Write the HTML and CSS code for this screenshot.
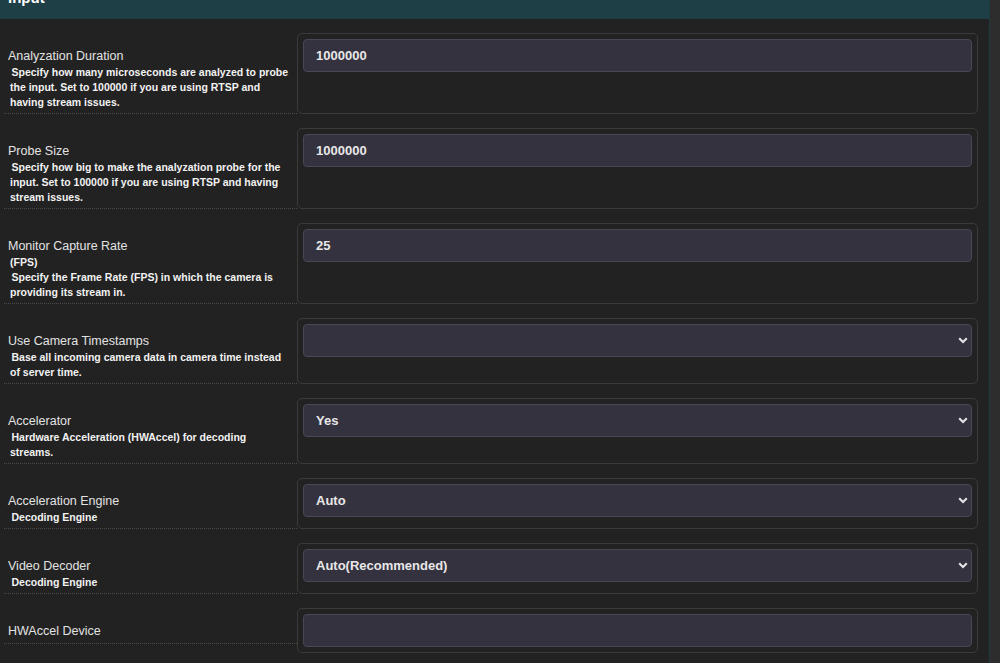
FILE: index.html
```html
<!DOCTYPE html>
<html>
<head>
<meta charset="utf-8">
<title>Input</title>
<link rel="stylesheet" href="styles.css">
</head>
<body>
<div class="page">
  <main class="panel">
    <div class="panel-head"><h3 class="panel-title">Input</h3></div>
    <div class="panel-body">

      <div class="row">
        <div class="lbl">
          <span class="lbl-title">Analyzation Duration</span>
          <span class="lbl-desc">Specify how many microseconds are analyzed to probe the input. Set to 100000 if you are using RTSP and having stream issues.</span>
        </div>
        <div class="field"><div class="input">1000000</div></div>
      </div>

      <div class="row">
        <div class="lbl">
          <span class="lbl-title">Probe Size</span>
          <span class="lbl-desc">Specify how big to make the analyzation probe for the input. Set to 100000 if you are using RTSP and having stream issues.</span>
        </div>
        <div class="field"><div class="input">1000000</div></div>
      </div>

      <div class="row">
        <div class="lbl">
          <span class="lbl-title">Monitor Capture Rate</span>
          <span class="lbl-sub">(FPS)</span>
          <span class="lbl-desc">Specify the Frame Rate (FPS) in which the camera is providing its stream in.</span>
        </div>
        <div class="field"><div class="input">25</div></div>
      </div>

      <div class="row">
        <div class="lbl">
          <span class="lbl-title">Use Camera Timestamps</span>
          <span class="lbl-desc">Base all incoming camera data in camera time instead of server time.</span>
        </div>
        <div class="field"><div class="input select"><span class="val"></span><svg class="chev" width="10" height="7" viewBox="0 0 10 7"><polyline points="1.2,1.2 5,5 8.8,1.2" fill="none" stroke="#e6e6e6" stroke-width="2"/></svg></div></div>
      </div>

      <div class="row">
        <div class="lbl">
          <span class="lbl-title">Accelerator</span>
          <span class="lbl-desc">Hardware Acceleration (HWAccel) for decoding streams.</span>
        </div>
        <div class="field"><div class="input select"><span class="val">Yes</span><svg class="chev" width="10" height="7" viewBox="0 0 10 7"><polyline points="1.2,1.2 5,5 8.8,1.2" fill="none" stroke="#e6e6e6" stroke-width="2"/></svg></div></div>
      </div>

      <div class="row">
        <div class="lbl">
          <span class="lbl-title">Acceleration Engine</span>
          <span class="lbl-desc">Decoding Engine</span>
        </div>
        <div class="field"><div class="input select"><span class="val">Auto</span><svg class="chev" width="10" height="7" viewBox="0 0 10 7"><polyline points="1.2,1.2 5,5 8.8,1.2" fill="none" stroke="#e6e6e6" stroke-width="2"/></svg></div></div>
      </div>

      <div class="row">
        <div class="lbl">
          <span class="lbl-title">Video Decoder</span>
          <span class="lbl-desc">Decoding Engine</span>
        </div>
        <div class="field"><div class="input select"><span class="val">Auto(Recommended)</span><svg class="chev" width="10" height="7" viewBox="0 0 10 7"><polyline points="1.2,1.2 5,5 8.8,1.2" fill="none" stroke="#e6e6e6" stroke-width="2"/></svg></div></div>
      </div>

      <div class="row">
        <div class="lbl">
          <span class="lbl-title">HWAccel Device</span>
        </div>
        <div class="field"><div class="input"></div></div>
      </div>

    </div>
  </main>
  <div class="scroll-track"></div>
</div>
</body>
</html>
```

FILE: styles.css
```css
html, body {
  margin: 0;
  padding: 0;
  background: #222222;
}

body {
  font-family: "Liberation Sans", Arial, sans-serif;
  color: #e4e4e4;
}

.page {
  display: flex;
  height: 663px;
  overflow: hidden;
}

.panel {
  flex: 1;
  min-width: 0;
  background: #222222;
  border-right: 1px solid #1d3a3f;
}

.panel-head {
  height: 19px;
  overflow: hidden;
  background: #1f3f46;
  padding-left: 8px;
}

.panel-title {
  margin: -11px 0 0 0;
  font-size: 15px;
  line-height: 18px;
  font-weight: bold;
  color: #ffffff;
}

.panel-body {
  padding: 14px 11px 0 4px;
}

.row {
  display: flex;
  margin-bottom: 14px;
}

.lbl {
  width: 293px;
  flex: none;
  box-sizing: border-box;
  align-self: flex-start;
  padding: 14px 7px 3px 4px;
  border-bottom: 1px dotted #4a4a4a;
}

.lbl-title {
  display: block;
  font-size: 12.5px;
  line-height: 18px;
  color: #e2e2e2;
}

.lbl-sub,
.lbl-desc {
  display: block;
  margin-left: 2px;
  font-size: 10.5px;
  line-height: 15px;
  font-weight: bold;
  color: #f2f2f2;
}

.lbl-desc {
  text-indent: 1.5px;
}

.field {
  flex: 1;
  min-width: 0;
  border: 1px solid #3a3a3a;
  border-radius: 5px;
  padding: 5px;
}

.input {
  display: flex;
  align-items: center;
  box-sizing: border-box;
  height: 33px;
  padding: 0 12px;
  background: #35323f;
  border: 1px solid #494656;
  border-radius: 4px;
  font-size: 13px;
  font-weight: bold;
  color: #e8e8e8;
}

.input.select {
  padding-right: 3px;
}

.val {
  flex: 1;
}

.chev {
  flex: none;
}

.scroll-track {
  width: 10px;
  flex: none;
  background: #2d2d2d;
}
```
